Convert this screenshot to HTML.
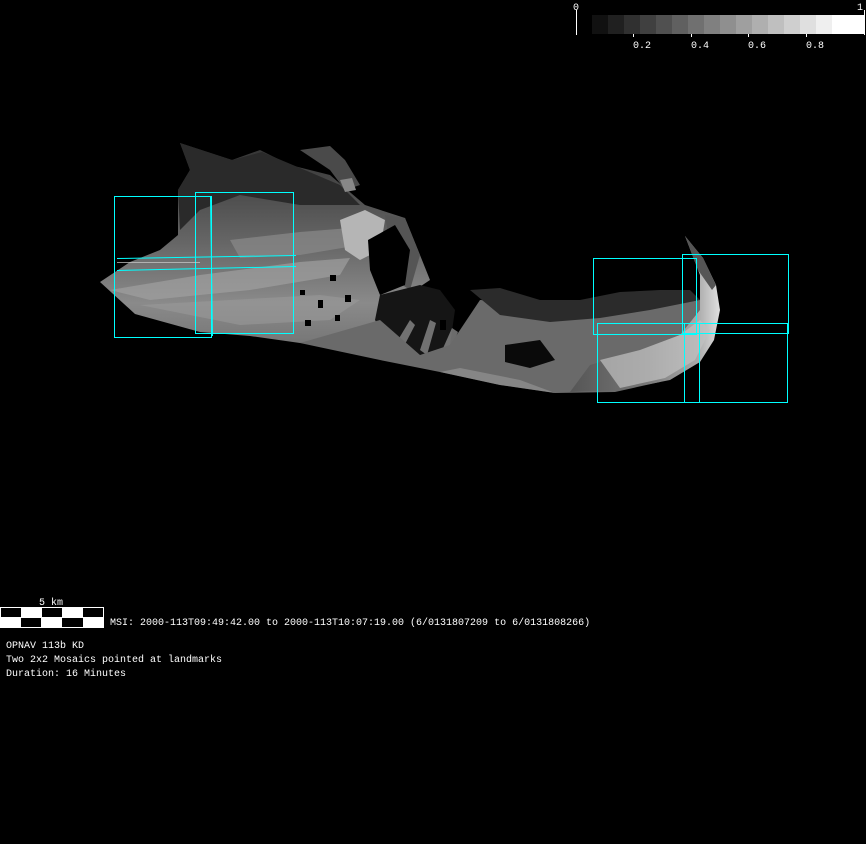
<!DOCTYPE html>
<html><head><meta charset="utf-8"><style>
html,body{margin:0;padding:0;background:#000;width:866px;height:844px;overflow:hidden}
svg{display:block}
text{font-family:"Liberation Mono","DejaVu Sans Mono",monospace;font-size:10px;fill:#fff}
</style></head><body>
<svg width="866" height="844" viewBox="0 0 866 844" xmlns="http://www.w3.org/2000/svg">
<defs>
<linearGradient id="g1" x1="0" y1="0" x2="0" y2="1">
<stop offset="0" stop-color="#333"/><stop offset="0.5" stop-color="#666"/><stop offset="0.8" stop-color="#8a8a8a"/><stop offset="1" stop-color="#777"/></linearGradient>
<linearGradient id="g2" x1="0" y1="0" x2="1" y2="0">
<stop offset="0" stop-color="#555"/><stop offset="0.5" stop-color="#777"/><stop offset="0.85" stop-color="#aaa"/><stop offset="1" stop-color="#e0e0e0"/></linearGradient>
<linearGradient id="g3" x1="0" y1="0" x2="0" y2="1">
<stop offset="0" stop-color="#1a1a1a"/><stop offset="0.5" stop-color="#3a3a3a"/><stop offset="1" stop-color="#888"/></linearGradient>
</defs>
<!-- colorbar -->
<line x1="576.5" y1="10" x2="576.5" y2="35" stroke="#fff"/>
<text x="573" y="10">0</text><text x="857" y="10">1</text>
<g>
<rect x="592" y="15" width="16" height="19" fill="#111"/>
<rect x="608" y="15" width="16" height="19" fill="#202020"/>
<rect x="624" y="15" width="16" height="19" fill="#303030"/>
<rect x="640" y="15" width="16" height="19" fill="#404040"/>
<rect x="656" y="15" width="16" height="19" fill="#505050"/>
<rect x="672" y="15" width="16" height="19" fill="#606060"/>
<rect x="688" y="15" width="16" height="19" fill="#707070"/>
<rect x="704" y="15" width="16" height="19" fill="#808080"/>
<rect x="720" y="15" width="16" height="19" fill="#8f8f8f"/>
<rect x="736" y="15" width="16" height="19" fill="#9f9f9f"/>
<rect x="752" y="15" width="16" height="19" fill="#afafaf"/>
<rect x="768" y="15" width="16" height="19" fill="#bfbfbf"/>
<rect x="784" y="15" width="16" height="19" fill="#cfcfcf"/>
<rect x="800" y="15" width="16" height="19" fill="#dfdfdf"/>
<rect x="816" y="15" width="16" height="19" fill="#efefef"/>
<rect x="832" y="15" width="32" height="19" fill="#fff"/>
</g>
<line x1="864.5" y1="10" x2="864.5" y2="35" stroke="#fff"/>
<g stroke="#fff"><line x1="633.5" y1="34" x2="633.5" y2="37"/><line x1="691.5" y1="34" x2="691.5" y2="37"/><line x1="748.5" y1="34" x2="748.5" y2="37"/><line x1="806.5" y1="34" x2="806.5" y2="37"/></g>
<text x="633" y="48">0.2</text><text x="691" y="48">0.4</text><text x="748" y="48">0.6</text><text x="806" y="48">0.8</text>

<!-- asteroid: left lobe -->
<path d="M100,282 L130,262 L160,250 L178,235 L178,190 L190,170 L180,143 L232,160 L260,150 L290,165 L330,175 L365,205 L405,218 L420,255 L430,280 L400,300 L380,320 L340,340 L300,343 L250,336 L200,332 L135,314 Z" fill="url(#g1)"/>
<path d="M178,190 L190,170 L180,143 L232,160 L262,152 L300,168 L340,185 L360,205 L300,205 L240,195 L200,210 L180,230 Z" fill="#2a2a2a"/>
<path d="M300,150 L330,146 L345,160 L360,185 L345,190 L330,170 Z" fill="#4a4a4a"/>
<path d="M340,180 L352,178 L356,190 L345,192 Z" fill="#888"/>
<!-- bright streaks -->
<path d="M110,290 L200,275 L300,262 L350,258 L340,275 L250,290 L150,300 Z" fill="#a0a0a0" opacity="0.7"/>
<path d="M140,305 L230,300 L320,295 L360,300 L330,320 L240,325 Z" fill="#999" opacity="0.6"/>
<path d="M230,240 L300,232 L350,228 L360,245 L300,255 L240,258 Z" fill="#8a8a8a" opacity="0.7"/>
<!-- crater rim -->
<path d="M340,220 L365,210 L385,220 L380,250 L360,260 L345,250 Z" fill="#b5b5b5"/>
<path d="M385,215 L405,218 L420,255 L410,290 L395,280 Z" fill="#555"/>
<path d="M368,240 L395,225 L410,250 L405,285 L380,295 L370,270 Z" fill="#000"/>
<!-- dark middle with texture -->
<path d="M380,295 L420,285 L440,290 L455,310 L450,345 L420,355 L390,345 L375,320 Z" fill="#151515"/>
<g fill="#000">
<rect x="330" y="275" width="6" height="6"/><rect x="345" y="295" width="6" height="7"/><rect x="318" y="300" width="5" height="8"/>
<rect x="305" y="320" width="6" height="6"/><rect x="335" y="315" width="5" height="6"/><rect x="360" y="330" width="5" height="6"/>
<rect x="300" y="290" width="5" height="5"/><rect x="440" y="320" width="6" height="10"/>
</g>
<g fill="#888" opacity="0.8">
<path d="M395,345 L410,320 L415,325 L402,350 Z"/><path d="M420,350 L430,320 L436,323 L427,355 Z"/><path d="M440,355 L452,328 L458,332 L447,358 Z"/>
</g>
<!-- body lower middle -->
<path d="M300,343 L380,320 L420,355 L450,345 L460,330 L480,300 L520,302 L560,310 L600,305 L650,295 L700,300 L705,340 L690,365 L660,382 L615,392 L555,393 L500,385 L440,372 L380,360 Z" fill="#6a6a6a"/>
<path d="M470,290 L500,288 L540,300 L580,300 L620,292 L660,290 L690,290 L700,300 L650,310 L600,318 L550,322 L500,315 Z" fill="#2b2b2b"/>
<!-- right crescent -->
<path d="M685,236 L703,258 L716,285 L720,310 L714,340 L700,362 L670,380 L620,390 L570,392 L590,365 L640,350 L680,335 L700,310 L700,275 Z" fill="url(#g2)"/>
<path d="M685,236 L703,258 L716,285 L712,290 L698,270 Z" fill="#555"/>
<path d="M600,360 L640,350 L680,335 L700,320 L710,330 L695,360 L665,378 L620,388 Z" fill="#c2c2c2" opacity="0.7"/>
<path d="M505,345 L540,340 L555,360 L530,368 L505,362 Z" fill="#0a0a0a"/>
<path d="M440,372 L500,385 L555,393 L520,380 L460,368 Z" fill="#999" opacity="0.6"/>

<!-- cyan boxes -->
<g fill="none" stroke="#0ff" stroke-width="1">
<rect x="114.5" y="196.5" width="97" height="141"/>
<rect x="195.5" y="192.5" width="98" height="141"/>
<line x1="117" y1="258.5" x2="296" y2="255.5"/>
<line x1="117" y1="270.5" x2="296" y2="266.5"/>
<line x1="210.5" y1="196" x2="212.5" y2="336"/>
<rect x="593.5" y="258.5" width="103" height="76"/>
<rect x="682.5" y="254.5" width="106" height="79"/>
<rect x="597.5" y="323.5" width="102" height="79"/>
<rect x="684.5" y="323.5" width="103" height="79"/>
</g>
<g fill="none" stroke="#ccc" stroke-width="1" opacity="0.7">
<line x1="117" y1="262.5" x2="200" y2="262.5"/>
</g>

<!-- scale bar -->
<text x="39" y="605">5 km</text>
<rect x="0" y="607" width="104" height="21" fill="#fff"/>
<g fill="#000">
<rect x="1" y="608" width="20" height="9"/>
<rect x="42" y="608" width="20" height="9"/>
<rect x="83" y="608" width="20" height="9"/>
<rect x="21" y="618" width="20" height="9"/>
<rect x="62" y="618" width="21" height="9"/>
</g>
<text x="110" y="625">MSI:  2000-113T09:49:42.00 to 2000-113T10:07:19.00 (6/0131807209 to 6/0131808266)</text>
<text x="6" y="648">OPNAV 113b KD</text>
<text x="6" y="662">Two 2x2 Mosaics pointed at landmarks</text>
<text x="6" y="676">Duration: 16 Minutes</text>
</svg>
</body></html>
